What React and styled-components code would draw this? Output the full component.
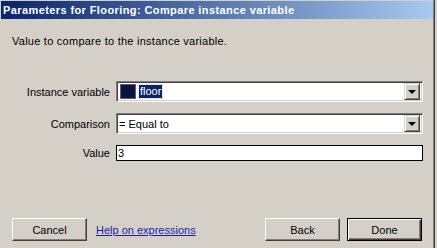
import styled, { createGlobalStyle } from "styled-components";

const GlobalStyle = createGlobalStyle`
  html, body {
    margin: 0;
    padding: 0;
    background: #d4d0c8;
  }
  body {
    font-family: "Liberation Sans", Arial, sans-serif;
    font-size: 11px;
    color: #000;
  }
`;

const Window = styled.div`
  width: 433px;
  height: 248px;
  display: flex;
  flex-direction: column;
  background: #d4d0c8;
  border-right: 1px solid #808080;
  box-shadow: 1px 0 0 #404040;
`;

const TitleBar = styled.div`
  margin: 1px 0 0 1px;
  height: 18px;
  padding-left: 2px;
  line-height: 18px;
  background: linear-gradient(to right, #0a246a, #a6caf0);
  color: #fff;
  font-weight: bold;
  font-size: 11px;
  letter-spacing: 0.4px;
  white-space: nowrap;
`;

const Description = styled.p`
  margin: 16px 0 0 12px;
  line-height: 13px;
  letter-spacing: 0.25px;
`;

const Form = styled.div`
  display: grid;
  grid-template-columns: 110px 307px;
  column-gap: 6px;
  row-gap: 11px;
  align-items: center;
  margin-top: 33px;
`;

const Label = styled.label`
  text-align: right;
  white-space: nowrap;
`;

const Combo = styled.div`
  box-sizing: border-box;
  height: 21px;
  display: flex;
  align-items: center;
  padding: 0 2px 0 1px;
  background: #fff;
  border-style: solid;
  border-width: 1px;
  border-color: #808080 #fff #fff #808080;
  box-shadow: inset 1px 1px 0 #404040, inset -1px -1px 0 #d4d0c8;
`;

const ComboValue = styled.div`
  flex: 1;
  display: flex;
  align-items: center;
  gap: 3px;
  padding-left: 1px;
  white-space: nowrap;
`;

const Swatch = styled.span`
  width: 14px;
  height: 13px;
  margin-left: 1px;
  background: ${(p) => p.color};
  border: 1px solid #5a5f78;
`;

const Selected = styled.span`
  background: #0a246a;
  color: #fff;
  padding: 0 1px;
  line-height: 13px;
  outline: 1px dotted #d4d0c8;
`;

const DropButton = styled.div`
  box-sizing: border-box;
  width: 16px;
  height: 17px;
  display: flex;
  align-items: center;
  justify-content: center;
  background: #d4d0c8;
  border-style: solid;
  border-width: 1px;
  border-color: #d4d0c8 #404040 #404040 #d4d0c8;
  box-shadow: inset 1px 1px 0 #fff, inset -1px -1px 0 #808080;

  &::after {
    content: "";
    border-left: 4px solid transparent;
    border-right: 4px solid transparent;
    border-top: 4px solid #000;
    margin-top: 1px;
  }
`;

const TextInput = styled.div`
  box-sizing: border-box;
  height: 16px;
  padding-left: 1px;
  line-height: 14px;
  background: #fff;
  border: 1px solid #000;
`;

const Footer = styled.div`
  margin-top: auto;
  display: flex;
  align-items: center;
  padding: 0 11px 7px 12px;
`;

const Button = styled.button`
  box-sizing: border-box;
  width: 75px;
  height: 23px;
  padding: 0;
  font: inherit;
  color: #000;
  background: #d4d0c8;
  border-style: solid;
  border-width: 1px;
  border-color: ${(p) => (p.primary ? "#000" : "#fff #404040 #404040 #fff")};
  box-shadow: ${(p) =>
    p.primary
      ? "inset 1px 1px 0 #fff, inset -1px -1px 0 #404040, inset -2px -2px 0 #808080"
      : "inset -1px -1px 0 #808080"};
`;

const HelpLink = styled.a`
  margin-left: 9px;
  color: #1c1ca8;
  text-decoration: underline;
  cursor: pointer;
`;

const Actions = styled.div`
  margin-left: auto;
  display: flex;
  gap: 7px;
`;

const App = () => {
  return (
    <>
      <GlobalStyle />
      <Window>
        <TitleBar>Parameters for Flooring: Compare instance variable</TitleBar>
        <Description>Value to compare to the instance variable.</Description>
        <Form>
          <Label>Instance variable</Label>
          <Combo>
            <ComboValue>
              <Swatch color="#0b1440" />
              <Selected>floor</Selected>
            </ComboValue>
            <DropButton />
          </Combo>
          <Label>Comparison</Label>
          <Combo>
            <ComboValue>= Equal to</ComboValue>
            <DropButton />
          </Combo>
          <Label>Value</Label>
          <TextInput>3</TextInput>
        </Form>
        <Footer>
          <Button>Cancel</Button>
          <HelpLink>Help on expressions</HelpLink>
          <Actions>
            <Button>Back</Button>
            <Button primary>Done</Button>
          </Actions>
        </Footer>
      </Window>
    </>
  );
};

export default App;
